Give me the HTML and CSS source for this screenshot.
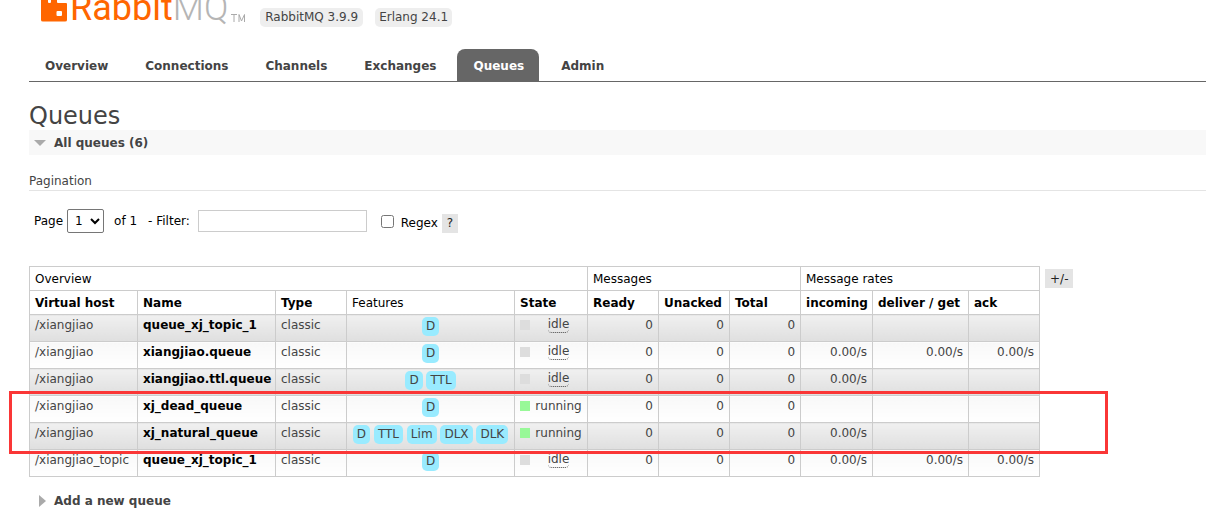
FILE: index.html
```html
<!DOCTYPE html>
<html lang="en">
<head>
<meta charset="utf-8">
<title>RabbitMQ Management</title>
<link rel="stylesheet" href="styles.css">
</head>
<body>
<header class="top">
  <a class="logo" href="#" aria-label="RabbitMQ">
    <svg class="logo-mark" viewBox="0 0 26 32" width="26" height="32" aria-hidden="true">
      <path fill="#f60" d="M0 0H7V12Q7 13 8 13H9Q10 13 10 12V0H16V12Q16 13 17 13H25Q26 13 26 14V30Q26 31.500 24 31.500H2Q0 31.500 0 30Z"/>
      <rect x="15.500" y="21" width="5.500" height="5" rx="1" fill="#fff"/>
    </svg>
    <span class="logo-text">Rabbit<span class="logo-mq">MQ</span></span>
    <svg class="logo-tm" viewBox="0 0 14 8" width="14" height="8" aria-hidden="true"><path d="M0 .5H6M3 .5V8M8 8V.5L10.500 7L13.500 .5V8" fill="none" stroke="#aaa"/></svg>
  </a>
  <span class="version">RabbitMQ 3.9.9</span>
  <span class="version">Erlang 24.1</span>
</header>
<nav class="tabs">
  <a href="#">Overview</a>
  <a href="#">Connections</a>
  <a href="#">Channels</a>
  <a href="#">Exchanges</a>
  <a href="#" class="selected">Queues</a>
  <a href="#">Admin</a>
</nav>
<main>
  <h1>Queues</h1>
  <h2 class="section open"><svg width="12" height="8" aria-hidden="true"><path d="M0 0H12L6 6Z" fill="#aaa"/></svg>All queues (6)</h2>
  <h3>Pagination</h3>
  <form class="filter">
    <label for="page">Page</label>
    <select id="page"><option>1</option></select>
    <span class="count">of 1</span>
    <label for="filter">- Filter:</label>
    <input type="text" id="filter">
    <input type="checkbox" id="regex">
    <label class="low" for="regex">Regex</label>
    <button type="button" class="help low">?</button>
  </form>
  <div class="listing">
    <div class="highlighted">
    <table>
      <colgroup><col class="c-host"><col class="c-name"><col class="c-num"><col class="c-feat"><col class="c-state"><col class="c-num"><col class="c-num"><col class="c-num"><col class="c-in"><col class="c-get"><col class="c-num"></colgroup>
      <thead>
        <tr><th colspan="5" class="plain">Overview</th><th colspan="3" class="plain">Messages</th><th colspan="3" class="plain">Message rates</th></tr>
        <tr><th>Virtual host</th><th>Name</th><th>Type</th><th class="plain">Features</th><th>State</th><th>Ready</th><th>Unacked</th><th>Total</th><th>incoming</th><th>deliver / get</th><th>ack</th></tr>
      </thead>
      <tbody>
        <tr><td>/xiangjiao</td><td><a href="#">queue_xj_topic_1</a></td><td>classic</td><td class="feat"><span>D</span></td><td><div class="state idle"><abbr>idle</abbr></div></td><td class="r">0</td><td class="r">0</td><td class="r">0</td><td></td><td></td><td></td></tr>
        <tr><td>/xiangjiao</td><td><a href="#">xiangjiao.queue</a></td><td>classic</td><td class="feat"><span>D</span></td><td><div class="state idle"><abbr>idle</abbr></div></td><td class="r">0</td><td class="r">0</td><td class="r">0</td><td class="r">0.00/s</td><td class="r">0.00/s</td><td class="r">0.00/s</td></tr>
        <tr><td>/xiangjiao</td><td><a href="#">xiangjiao.ttl.queue</a></td><td>classic</td><td class="feat"><span>D</span> <span>TTL</span></td><td><div class="state idle"><abbr>idle</abbr></div></td><td class="r">0</td><td class="r">0</td><td class="r">0</td><td class="r">0.00/s</td><td></td><td></td></tr>
        <tr><td>/xiangjiao</td><td><a href="#">xj_dead_queue</a></td><td>classic</td><td class="feat"><span>D</span></td><td><div class="state running"><b>running</b></div></td><td class="r">0</td><td class="r">0</td><td class="r">0</td><td></td><td></td><td></td></tr>
        <tr><td>/xiangjiao</td><td><a href="#">xj_natural_queue</a></td><td>classic</td><td class="feat"><span>D</span> <span>TTL</span> <span>Lim</span> <span>DLX</span> <span>DLK</span></td><td><div class="state running"><b>running</b></div></td><td class="r">0</td><td class="r">0</td><td class="r">0</td><td class="r">0.00/s</td><td></td><td></td></tr>
        <tr><td>/xiangjiao_topic</td><td><a href="#">queue_xj_topic_1</a></td><td>classic</td><td class="feat"><span>D</span></td><td><div class="state idle"><abbr>idle</abbr></div></td><td class="r">0</td><td class="r">0</td><td class="r">0</td><td class="r">0.00/s</td><td class="r">0.00/s</td><td class="r">0.00/s</td></tr>
      </tbody>
    </table>
    <div class="marker"></div>
    </div>
    <button type="button" class="help">+/-</button>
  </div>
  <h2 class="section"><svg width="7" height="14" aria-hidden="true"><path d="M0 0L7 6L0 12Z" fill="#aaa"/></svg>Add a new queue</h2>
</main>
</body>
</html>
```
FILE: styles.css
```css
* { box-sizing: border-box; }
body {
  margin: 0;
  padding-left: 29px;
  background: #fff;
  color: #444;
  font: 12px/16px Verdana, "DejaVu Sans", sans-serif;
}
a { color: inherit; text-decoration: none; }

.top { display: flex; align-items: flex-start; gap: 12px; height: 49px; padding-left: 12px; }
.logo { display: flex; align-items: flex-end; height: 32px; margin: -10px 3px 0 0; }
.logo-text { font: 36px/27px Roboto, sans-serif; color: #f60; padding-left: 3px; }
.logo-mq { color: #b5b5b5; font-weight: 300; }
.logo-tm { margin: 0 0 0 3px; }
.version { margin-top: 8px; padding: 2px 4px; background: #eee; border-radius: 5px; line-height: 15px; }
.version:first-of-type { padding: 2px 5px; }

.tabs { display: flex; height: 33px; border-bottom: 1px solid #666; }
.tabs a { padding: 9px 15px 7px 16px; margin-right: 6px; font-weight: bold; border-radius: 8px 8px 0 0; }
.tabs .selected { background: #666; color: #fff; }

h1 { margin: 21px 0 0; font-size: 24px; font-weight: normal; line-height: 27px; }
.section { display: flex; align-items: center; gap: 7px; margin: 0; padding: 5px 5px 3px; font-size: 12px; line-height: 17px; }
.section svg { margin: 0 1px 0 5px; }
.section.open { background: #f8f8f8; }
.section.open svg { margin: 0 1px 0 0; }
h3 { margin: 18px 0 0; border-bottom: 1px solid #e4e4e4; font-size: 12px; font-weight: normal; line-height: 17px; }

.filter { display: flex; align-items: center; height: 60px; padding-left: 5px; color: #000; }
.filter select { width: 37px; height: 24px; margin: 0 10px 0 4px; padding: 0 0 0 3px; border: 1px solid #767676; border-radius: 2px; background: #fff; font: inherit; color: #000; }
.count { margin-right: 11px; }
.filter input[type=text] { width: 169px; height: 22px; margin: 0 14px 0 8px; padding: 2px; border: 1px solid #ccc; }
.filter input[type=checkbox] { width: 13px; height: 13px; margin: 0 7px 0 0; }
.help { height: 19px; padding: 0 5px; border: 0; background: #e4e4e4; color: #222; font: inherit; }
.filter .help { margin-left: 4px; }
.filter .low { margin-top: 4px; }

.listing { display: flex; align-items: flex-start; gap: 5px; margin-top: 15px; }
.listing > .help { margin-top: 3px; }
.highlighted { position: relative; }
table { border-collapse: collapse; table-layout: fixed; width: 1011px; }
.c-host { width: 108px; }
.c-name { width: 138px; }
.c-num { width: 71px; }
.c-feat { width: 168px; }
.c-state { width: 73px; }
.c-in { width: 72px; }
.c-get { width: 96px; }
th, td { border: 1px solid #ccc; padding: 0 5px; text-align: left; white-space: nowrap; }
th { height: 24px; color: #000; }
.plain { font-weight: normal; }
td { height: 27px; padding: 2px 5px 0; vertical-align: top; }
tbody tr:nth-child(odd) td { background: linear-gradient(#f0f0f0, #dfdfdf); }
tbody tr:nth-child(even) td { background: linear-gradient(#f8f8f8, #fff); }
td a { color: #000; font-weight: bold; }
.r { text-align: right; }
.feat { text-align: center; }
.feat span { display: inline-block; padding: 2px 4px; border-radius: 5px; background: #99ebff; line-height: 15px; }
.state { display: flex; align-items: center; gap: 5px; }
.state::before { content: ""; width: 10px; height: 10px; background: #ddd; }
.state > * { margin: 0 auto; font-weight: normal; }
.state.running::before { background: #98f898; }
abbr { border-bottom: 1px dotted #444; border-radius: 4px; line-height: 15px; }
.marker { position: absolute; top: 125px; left: -20px; width: 1099px; height: 63px; border: 3px solid #fa3636; }
.listing + .section { margin-top: 11px; }
```
